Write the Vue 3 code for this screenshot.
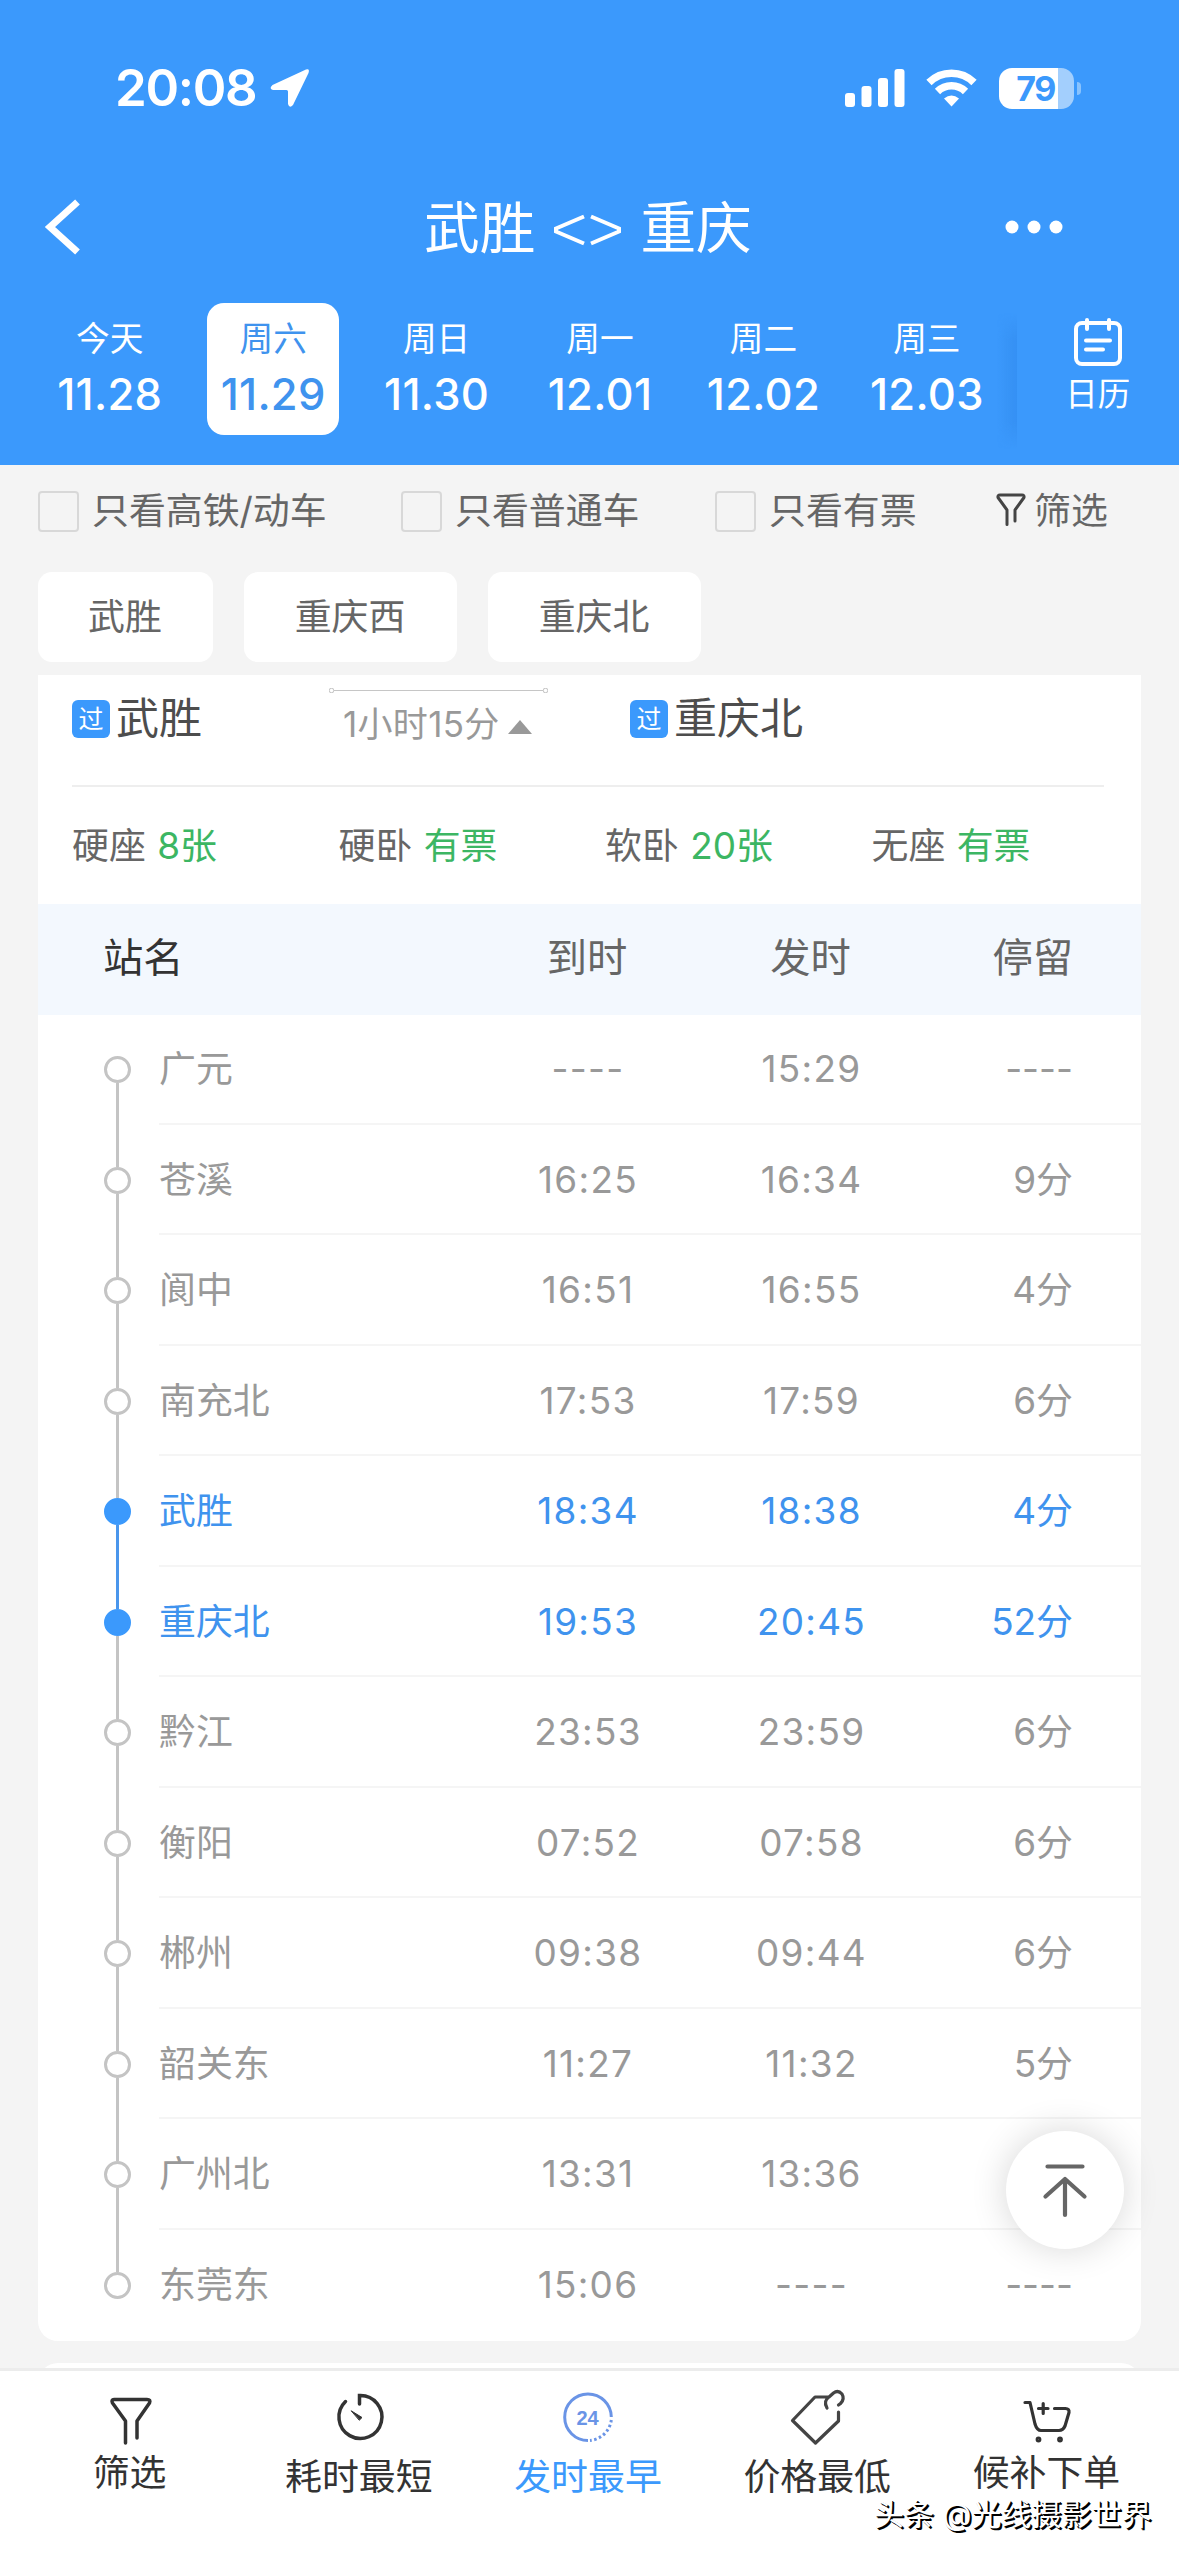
<script setup>
const days = [
  { name: '今天', date: '11.28' },
  { name: '周六', date: '11.29', active: true },
  { name: '周日', date: '11.30' },
  { name: '周一', date: '12.01' },
  { name: '周二', date: '12.02' },
  { name: '周三', date: '12.03' },
]
const seats = [
  { type: '硬座', left: '8张' },
  { type: '硬卧', left: '有票' },
  { type: '软卧', left: '20张' },
  { type: '无座', left: '有票' },
]
const stops = [
  { name: '广元', arrive: '----', depart: '15:29', stay: '----' },
  { name: '苍溪', arrive: '16:25', depart: '16:34', stay: '9分' },
  { name: '阆中', arrive: '16:51', depart: '16:55', stay: '4分' },
  { name: '南充北', arrive: '17:53', depart: '17:59', stay: '6分' },
  { name: '武胜', arrive: '18:34', depart: '18:38', stay: '4分', on: true, ride: true },
  { name: '重庆北', arrive: '19:53', depart: '20:45', stay: '52分', on: true },
  { name: '黔江', arrive: '23:53', depart: '23:59', stay: '6分' },
  { name: '衡阳', arrive: '07:52', depart: '07:58', stay: '6分' },
  { name: '郴州', arrive: '09:38', depart: '09:44', stay: '6分' },
  { name: '韶关东', arrive: '11:27', depart: '11:32', stay: '5分' },
  { name: '广州北', arrive: '13:31', depart: '13:36', stay: '' },
  { name: '东莞东', arrive: '15:06', depart: '----', stay: '----' },
]
</script>

<template>
  <div class="page">
    <header class="top">
      <div class="status">
        <div class="clock">
          <span>20:08</span>
          <svg width="42" height="42" viewBox="0 0 42 42"><path d="M36 2.500 L2.500 18 Q-1.500 21.500 3 23 H16.500 Q18 23 18 24.500 V37 Q19.500 42 23 38 L38.500 6 Q40 1 36 2.500Z" fill="#fff" /></svg>
        </div>
        <div class="indicators">
          <svg width="60" height="38" viewBox="0 0 60 38" fill="#fff">
            <rect x="0" y="24" width="10" height="14" rx="3" /><rect x="16.500" y="17" width="10" height="21" rx="3" /><rect x="33" y="9" width="10" height="29" rx="3" /><rect x="49.500" y="0" width="10" height="38" rx="3" />
          </svg>
          <svg class="wifi" width="51" height="38" viewBox="0 0 51 38" fill="none" stroke="#fff" stroke-width="7.500">
            <path d="M3 13.500 A32 32 0 0 1 48 13.500" /><path d="M11.500 22.500 A20 20 0 0 1 39.500 22.500" />
            <path d="M25.500 37.500 L18 29.500 Q25.500 23.500 33 29.500Z" fill="#fff" stroke="none" />
          </svg>
          <span class="battery"><b>79</b></span><i class="nub"></i>
        </div>
      </div>
      <nav class="titlebar">
        <svg width="38" height="54" viewBox="0 0 38 54" fill="none" stroke="#fff" stroke-width="7"><path d="M34.500 2 L7 27 L34.500 52" /></svg>
        <h1><span>武胜</span><svg width="68" height="32" viewBox="0 0 68 32" fill="none" stroke="#fff" stroke-width="4"><path d="M31 2.500 L3 14.500 V17.500 L31 29.500 M38 2.500 L66 14.500 V17.500 L38 29.500" /></svg><span>重庆</span></h1>
        <svg width="60" height="16" viewBox="0 0 60 16" fill="#fff"><circle cx="8" cy="8" r="6.500" /><circle cx="30" cy="8" r="6.500" /><circle cx="52" cy="8" r="6.500" /></svg>
      </nav>
      <div class="dates">
        <div v-for="d in days" :key="d.date" class="day" :class="{ active: d.active }">
          <span>{{ d.name }}</span><b>{{ d.date }}</b>
        </div>
        <div class="calendar">
          <svg width="52" height="52" viewBox="0 0 52 52" fill="none" stroke="#fff" stroke-width="4" stroke-linecap="round"><rect x="4" y="7" width="44" height="41" rx="6" /><path d="M15 4v9M37 4v9M14 24.500h24M14 33.500h17" /></svg>
          <span>日历</span>
        </div>
      </div>
    </header>

    <main class="body">
      <div class="filters">
        <label class="f1"><i></i>只看高铁/动车</label>
        <label class="f2"><i></i>只看普通车</label>
        <label class="f3"><i></i>只看有票</label>
        <div class="sift">
          <svg width="30" height="34" viewBox="0 0 30 34" fill="none" stroke="#444" stroke-width="3" stroke-linecap="round" stroke-linejoin="round"><path d="M11 31.500V17L2 4.500Q1.500 2 4 2H26Q28.500 2 28 4.500L19 17V28" /></svg>
          <span>筛选</span>
        </div>
      </div>
      <div class="chips"><span>武胜</span><span>重庆西</span><span>重庆北</span></div>

      <section class="card">
        <div class="route">
          <div class="station from"><i>过</i><span>武胜</span></div>
          <div class="duration">
            <div class="track"></div>
            <p>1小时15分<svg width="24" height="14" viewBox="0 0 24 14"><path d="M12 0 24 14H0Z" fill="#999" /></svg></p>
          </div>
          <div class="station"><i>过</i><span>重庆北</span></div>
        </div>
        <div class="seats">
          <div v-for="s in seats" :key="s.type">{{ s.type }} <em>{{ s.left }}</em></div>
        </div>
        <div class="grid thead"><span>站名</span><span>到时</span><span>发时</span><span>停留</span></div>
        <div v-for="s in stops" :key="s.name" class="stop" :class="{ on: s.on, ride: s.ride }">
          <div class="rail"><i></i></div>
          <div class="grid row"><span>{{ s.name }}</span><span>{{ s.arrive }}</span><span>{{ s.depart }}</span><span>{{ s.stay }}</span></div>
        </div>
      </section>
      <section class="next"></section>
      <button class="totop">
        <svg width="50" height="60" viewBox="0 0 50 60" fill="none" stroke="#666" stroke-width="4.200" stroke-linecap="round" stroke-linejoin="round"><path d="M7.500 6.500H42.500M25 19V55M5.500 36.500 25 19 44.500 36.500" /></svg>
      </button>
    </main>

    <footer class="tabs">
      <div class="tab up">
        <svg width="56" height="56" viewBox="0 0 56 56" fill="none" stroke="#333" stroke-width="3.500" stroke-linecap="round" stroke-linejoin="round"><path d="M23.500 54V32L10.500 14Q9 10.500 12 10.500H45Q49 10.500 47.500 14L35 32V49" /></svg>
        <span>筛选</span>
      </div>
      <div class="tab">
        <svg width="56" height="56" viewBox="0 0 56 56" fill="none" stroke="#333" stroke-width="3.500" stroke-linecap="round"><path d="M28.500 15V6.500A21.500 21.500 0 1 1 14.500 12.500" /><path d="M20.500 22 31 28.500 28.500 31Z" fill="#333" stroke-width="1" stroke-linejoin="round" /></svg>
        <span>耗时最短</span>
      </div>
      <div class="tab sel">
        <svg width="56" height="56" viewBox="0 0 56 56" fill="none" stroke="#6a94e6" stroke-width="3"><path d="M28 51.500A23.300 23.300 0 1 1 51.300 28" /><path d="M51.300 31A23.300 23.300 0 0 1 30 51.400" stroke-dasharray="2.500 2.500" /><text x="27.500" y="35.500" text-anchor="middle">24</text></svg>
        <span>发时最早</span>
      </div>
      <div class="tab">
        <svg width="56" height="56" viewBox="0 0 56 56" fill="none" stroke="#444" stroke-width="3.200" stroke-linecap="round" stroke-linejoin="round"><path d="M40 8H26L3.500 31.500 26.500 54 49.500 32V23M38 19Q34 12 40 8L44.500 4Q49 .5 53 5 56 10 51.500 14.500L49.500 16" /></svg>
        <span>价格最低</span>
      </div>
      <div class="tab up">
        <svg width="56" height="56" viewBox="0 0 56 56" fill="none" stroke="#333" stroke-width="3.200" stroke-linecap="round" stroke-linejoin="round"><path d="M7 13.500H12L17 35Q19 41.500 23 41.500H41Q45 41.500 47 37L51 23.500Q51.500 19.500 47.500 19.500H36.500M20.500 19.500h9.500M25.200 14.500v10" /><circle cx="20.500" cy="50.500" r="1.300" /><circle cx="42" cy="50.500" r="1.300" /></svg>
        <span>候补下单</span>
      </div>
      <div class="credit">头条 @光线摄影世界</div>
    </footer>
  </div>
</template>

<style>
body { background: #f4f4f4; }
</style>

<style scoped>
* { box-sizing: border-box; margin: 0; padding: 0; }
.page {
  width: 1179px; height: 2556px; overflow: hidden; display: flex; flex-direction: column;
  font-family: Inter, "Noto Sans CJK SC", sans-serif; font-size: 36.900px; color: #666; background: #f4f4f4;
}
svg { display: block; flex: none; overflow: visible; }
span { white-space: nowrap; }
i, em { font-style: normal; }

.top { height: 465px; flex: none; background: #3b99fc; color: #fff; }
.status { height: 176px; padding: 0 98px 0 115px; display: flex; justify-content: space-between; align-items: center; }
.clock { display: flex; align-items: center; font-size: 51px; font-weight: 600; letter-spacing: -1.300px; }
.clock span { width: 155px; padding-bottom: 1px; }
.indicators { display: flex; align-items: center; }
.wifi { margin-left: 21px; }
.battery {
  margin-left: 22px; width: 75px; height: 41px; border-radius: 13px; display: flex; align-items: center; justify-content: center;
  background: linear-gradient(90deg, #fff 59px, #a3cffd 59px); color: #3b99fc; font-size: 34px;
}
.battery b { font-weight: 700; letter-spacing: -1.500px; margin-right: 2px; }
.nub { width: 4px; height: 13px; margin-left: 3px; border-radius: 0 4px 4px 0; background: #8ac3fd; }
.titlebar { height: 101px; padding: 0 115px 0 43px; display: grid; grid-template-columns: 200px 1fr 60px; align-items: center; }
.titlebar h1 { display: flex; align-items: center; gap: 17px; font-weight: 400; font-size: 55.700px; line-height: 58px; width: 330px; margin-left: 181px; }
.titlebar h1 span { padding-top: 3px; }
.titlebar h1 svg { margin: 7px 2px 0 1px; }
.dates { display: flex; margin-top: 26px; padding-left: 44px; gap: 31.900px; }
.day { width: 132px; height: 132px; border-radius: 17px; display: flex; flex-direction: column; align-items: center; font-size: 33.700px; line-height: 46px; padding-top: 13px; }
.day b { font-size: 43.500px; font-weight: 500; line-height: 50px; margin-top: 7px; letter-spacing: .3px; }
.day.active { background: #fff; color: #3f93ee; }
.calendar {
  margin-left: -8px; width: 163px; height: 146px; padding: 10px 0 0; display: flex; flex-direction: column; align-items: center;
  font-size: 32.500px; line-height: 46px;
}
.calendar::before {
  content: ""; align-self: flex-start; flex: none; width: 20px; height: 136px; margin: 0 0 -136px -20px;
  background: linear-gradient(90deg, rgba(40, 125, 225, 0), rgba(40, 125, 225, .3));
  -webkit-mask-image: linear-gradient(transparent, #000 20%, #000 80%, transparent);
  mask-image: linear-gradient(transparent, #000 20%, #000 80%, transparent);
}
.calendar svg { margin-top: 3px; }
.calendar span { margin-top: 4px; }

.body { flex: 1; min-height: 0; overflow: hidden; position: relative; padding: 0 38px; }
.filters { height: 107px; padding-top: 19px; display: flex; line-height: 54px; }
.filters label { display: flex; gap: 13px; white-space: nowrap; }
.filters i { width: 41px; height: 41px; margin-top: 7px; border: 2px solid #d8d8d8; border-radius: 4px; }
.f1 { width: 363px; } .f2 { width: 314px; } .f3 { width: 281px; }
.sift { display: flex; gap: 8px; } .sift svg { margin-top: 9px; }
.chips { display: flex; gap: 31px; }
.chips span { width: 213px; height: 90px; border-radius: 14px; background: #fff; text-align: center; line-height: 90px; padding-right: 1px; }
.chips span:first-child { width: 175px; }

.card { margin-top: 13px; height: 1666px; background: #fff; border-radius: 0 0 20px 20px; overflow: hidden; }
.route { height: 112px; margin: 0 37px 0 34px; border-bottom: 2px solid #eee; display: flex; }
.station { display: flex; align-items: center; height: 87px; color: #4d4d4d; font-size: 43px; gap: 6px; line-height: 60px; }
.station span { margin-top: -1px; }
.station.from { width: 257px; }
.station i { width: 38px; height: 38px; border-radius: 6px; background: #3b99fc; color: #fff; font-size: 25px; line-height: 38px; text-align: center; }
.duration { width: 301px; padding-top: 13px; }
.track { width: 219px; height: 5px; background: radial-gradient(circle, #fff 1.200px, #bbb 2.500px, transparent 3px) 0 0 / 5px 5px no-repeat, radial-gradient(circle, #fff 1.200px, #bbb 2.500px, transparent 3px) 100% 0 / 5px 5px no-repeat, linear-gradient(#c6c6c6, #c6c6c6) 50% 50% / 210px 1px no-repeat; }
.duration p { display: flex; gap: 8px; margin-left: 14px; color: #999; font-size: 35px; letter-spacing: .3px; line-height: 48px; margin-top: 7px; white-space: nowrap; }
.duration svg { margin-top: 20px; }
.seats { height: 117px; padding-left: 34px; display: flex; line-height: 117px; }
.seats div { width: 266.500px; white-space: nowrap; }
.seats em { color: #3cb663; margin-left: 1px; }
.grid { display: grid; align-items: center; line-height: 50px; }
.thead { height: 111px; padding: 0 68px 4px 65px; grid-template-columns: 372px 224px 223px 1fr; background: #f3f8fe; font-size: 40.300px; }
.thead span:nth-child(n + 2) { text-align: center; }
.thead span:first-child { color: #333; }
.thead span:last-child, .row span:last-child { text-align: right; }
.stop { height: 110.500px; display: flex; color: #999; }
.rail { width: 121px; padding-left: 66px; display: flex; flex-direction: column; }
.rail i { width: 27px; height: 27px; border: 3px solid #c4c4c4; border-radius: 50%; flex: none; }
.rail::before, .rail::after { content: ""; width: 3px; margin-left: 12px; background: #c4c4c4; }
.rail::before { height: 41px; } .rail::after { flex: 1; }
.row { flex: 1; height: 109.500px; padding: 1px 68px 0 0; grid-template-columns: 317px 224px 223px 1fr; border-bottom: 2px solid #f5f5f5; }
.row span:nth-child(2), .row span:nth-child(3) { text-align: center; letter-spacing: 1.300px; }
.on { color: #3f93ee; }
.on .rail i { background: #3b99fc; border-color: #3b99fc; }
.ride .rail::after, .ride + .stop .rail::before { background: #4a96ec; }
.stop:nth-child(4) .rail::before, .stop:last-child .rail::after { background: transparent; }
.stop:last-child .row { border-color: transparent; }
.next { height: 30px; margin-top: 22px; background: #fff; border-radius: 20px 20px 0 0; }
.totop {
  position: absolute; left: 1006px; top: 1666px; width: 118px; height: 118px; border: 0; border-radius: 50%; background: #fff;
  display: flex; align-items: center; justify-content: center; box-shadow: 0 0 36px rgba(0, 0, 0, .16);
}

.tabs { position: relative; flex: none; height: 188px; background: #fff; border-top: 3px solid #ececec; padding: 0 18px 0 15px; display: flex; color: #333; }
.tab { flex: 1; display: flex; flex-direction: column; align-items: center; padding-top: 18px; line-height: 54px; }
.tab span { margin-top: 5px; }
.tab.up span { margin-top: 1px; }
.sel span { color: #3b99fc; }
.sel text { font: 700 20px "Liberation Sans", Arial, sans-serif; fill: #6a94e6; stroke: none; }
.credit { position: absolute; left: 874px; top: 121px; font-size: 30px; line-height: 44px; white-space: nowrap; color: #fff; text-shadow: 2px 2px 0 #000, 1px 1px 0 #000; }
</style>
